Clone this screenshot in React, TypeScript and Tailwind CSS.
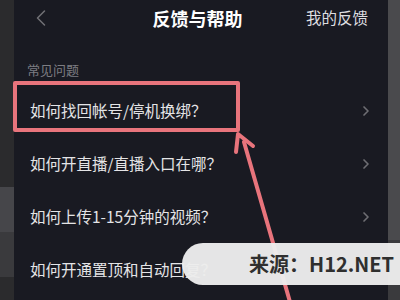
import { ChevronLeft, ChevronRight } from 'lucide-react';

const questions = [
  '如何找回帐号/停机换绑？',
  '如何开直播/直播入口在哪？',
  '如何上传1-15分钟的视频？',
  '如何开通置顶和自动回复？',
];

export default function App() {
  return (
    <div
      className="relative w-[400px] h-[300px] overflow-hidden flex bg-[#191a22]"
      style={{ fontFamily: '"Noto Sans CJK SC", "Noto Sans", sans-serif' }}
    >
      {/* Left background strip */}
      <div className="w-[14px] flex flex-col">
        <div className="h-[187px] bg-[#2b2b2d]" />
        <div className="h-[45px] bg-[#46464a]" />
        <div className="h-[45px] bg-[#3a3a3d]" />
        <div className="flex-1 bg-[#2b2b2d]" />
      </div>

      {/* Main panel */}
      <div className="flex-1 flex flex-col">
        {/* Header */}
        <div className="h-[35px] grid grid-cols-[1fr_auto_1fr] items-center pl-[13px] pr-[20px]">
          <ChevronLeft className="w-7 h-7 text-[#6f6f74]" strokeWidth={1.3} />
          <div className="text-[18px] font-bold text-white leading-none">反馈与帮助</div>
          <div className="justify-self-end text-[15.5px] text-[#dedee0] leading-none">我的反馈</div>
        </div>

        {/* Section label */}
        <div className="mt-[27px] h-[16px] pl-[13px] text-[13px] leading-[16px] text-[#7d7d82]">
          常见问题
        </div>

        {/* Question list */}
        <div className="mt-[6px] flex flex-col">
          {questions.map((q) => (
            <div key={q} className="h-[53px] flex items-center justify-between pl-[16px] pr-[14px]">
              <span className="text-[15.5px] text-[#e4e4e6] leading-none">{q}</span>
              <ChevronRight className="w-4 h-4 text-[#6e6e73]" strokeWidth={2.5} />
            </div>
          ))}
        </div>
      </div>

      {/* Right background strip */}
      <div className="w-[12px] flex flex-col">
        <div className="h-[240px] bg-[#4a4a4d]" />
        <div className="flex-1 bg-[#3a3a3d]" />
      </div>

      {/* Highlight box */}
      <div className="absolute left-[13px] top-[81px] w-[227px] h-[51px] border-[4px] border-[#e8747c] rounded-[2px]" />

      {/* Arrow */}
      <svg className="absolute left-0 top-0" width="400" height="300" viewBox="0 0 400 300">
        <line x1="244" y1="142" x2="290" y2="302" stroke="#e8747c" strokeWidth="4" strokeLinecap="round" />
        <path d="M238 134 L236 152 M238 134 L253 146" stroke="#e8747c" strokeWidth="4" strokeLinecap="round" fill="none" />
      </svg>

      {/* Watermark */}
      <div className="absolute left-[182px] top-[243px] w-[230px] h-[42px] rounded-l-[21px] bg-[#ececec]/[0.97] flex items-center pl-[67px]">
        <span className="text-[20px] font-bold text-[#2f2f2f] leading-none">来源：H12.NET</span>
      </div>
    </div>
  );
}
